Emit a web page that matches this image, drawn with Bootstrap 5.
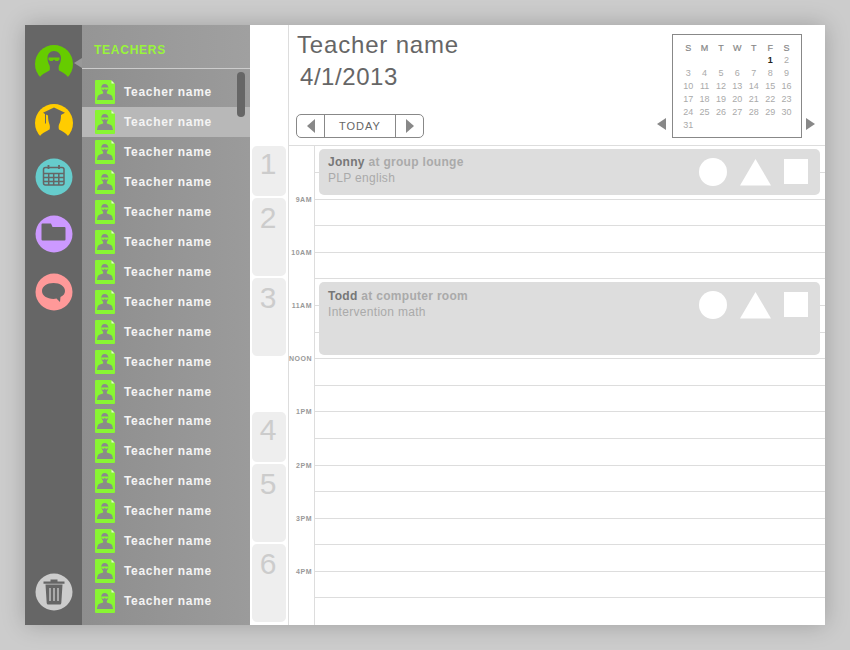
<!DOCTYPE html>
<html lang="en"><head><meta charset="utf-8"><title>Teachers</title>
<link href="https://cdn.jsdelivr.net/npm/bootstrap@5.3.0/dist/css/bootstrap.min.css" rel="stylesheet">
<style>
html,body{height:100%}
body{background:#ccc;font-family:"Liberation Sans",Arial,sans-serif;overflow:hidden}
.app-shell{width:800px;height:600px;margin:25px;background:#fff;box-shadow:0 0 22px rgba(0,0,0,.22);overflow:hidden}
.rail{width:57px;background:#666;padding-top:20px;position:relative}
.rail-ico{display:block;width:38px;height:38px;margin-left:10px;flex:none}
.r1{margin-bottom:21px}.r2{margin-bottom:15.5px}.r3{margin-bottom:19px}.r4{margin-bottom:20px}
.rail-trash{margin-top:auto;margin-bottom:14.5px}
.panel{width:168px;background:linear-gradient(90deg,#8e8e8e,#9b9b9b);position:relative}
.panel-head{height:44px;border-bottom:1px solid #ccc;background:linear-gradient(90deg,#959595,#a0a0a0);padding:18px 0 0 12px;color:#99f53a;font-weight:700;font-size:12px;line-height:14px;letter-spacing:.75px}
.notch{position:absolute;left:-8px;top:33px;width:0;height:0;border-style:solid;border-width:5.5px 8px 5.5px 0;border-color:transparent #999 transparent transparent}
.t-list{padding-top:8px}
.t-row{height:29.96px;padding-left:13px;color:#f4f4f4;font-weight:700;font-size:12px;letter-spacing:.67px}
.t-row.on{background:#b8b8b8}
.t-ico{width:20px;height:24px;margin-right:9px;flex:none}
.thumb{position:absolute;left:155px;top:47px;width:7.5px;height:45px;border-radius:4px;background:#666}
.gutter{width:39px;border-right:1px solid #ddd;padding:121px 2px 0 2px;flex:none}
.period{background:#eee;border-radius:5px;width:34px;color:#ccc;font-size:30px;padding-right:2px;text-align:center;margin-bottom:2px}
.h50{height:50px;line-height:35px}.h78{height:78px;line-height:40px}.skip{margin-top:56px}
.top-bar{height:121px;border-bottom:1px solid #ddd;position:relative;flex:none;padding-left:7px}
.ttl{font-size:24px;line-height:30px;color:#666;letter-spacing:.83px;margin-top:5px;padding-left:1px}
.dte{font-size:24px;line-height:30px;color:#666;letter-spacing:.55px;margin-top:2px;padding-left:4px}
.today{margin-top:22px;width:128px;height:24px;border:1px solid #888;border-radius:5px;color:#666;font-size:11px;letter-spacing:1px}
.today>div{height:100%}
.seg1{width:28px;border-right:1px solid #888}
.seg2{width:71px;border-right:1px solid #888}
.seg3{flex:1}
.mini{position:absolute;left:383px;top:9px;width:130px;height:104px;border:1px solid #888;padding:7px 7px 0 7px;display:grid;grid-template-columns:repeat(7,16.4px);grid-template-rows:12px;grid-auto-rows:13px;font-size:9px;line-height:13px;color:#aaa;text-align:center;background:#fff}
.mini b{color:#888;font-weight:400;-webkit-text-stroke:.2px #888}
.mini .cur{color:#222;font-weight:700}
.m-prev{position:absolute;left:368px;top:93px}
.m-next{position:absolute;left:517px;top:93px}
.time-col{width:26px;border-right:1px solid #ddd;flex:none;padding-top:26.6px;font-size:7px;font-weight:700;color:#999;letter-spacing:.5px;text-align:right}
.time-col div{height:53.2px;line-height:53.2px;padding-right:2px}
.grid-area{position:relative;flex:1;padding-top:.4px}
.hl{height:26.6px;border-bottom:1px solid #ddd}
.evt{position:absolute;left:4px;right:5px;background:#ddd;border-radius:5px;padding:6px 9px;font-size:12px;line-height:16px;letter-spacing:.3px;color:#aaa}
.evt strong{color:#777}.evt .wh{font-weight:700;color:#aaa}
.e1{top:3px;height:46px;padding-top:5px}.e2{top:136px;height:73px}
.shapes{position:absolute;right:12px;top:9px}
</style></head>
<body>
<svg width="0" height="0" class="position-absolute">
<symbol id="tdoc" viewBox="0 0 20 24">
<path d="M1 0H16L20 4V23a1 1 0 0 1-1 1H1a1 1 0 0 1-1-1V1a1 1 0 0 1 1-1Z" fill="#88f533"/>
<path d="M16.500 .5 19.500 3.500H16.500Z" fill="#e6f7d2"/>
<path d="M9.700 4c2.200 0 3.600 1.500 3.600 3.600 0 1.800-.6 3.300-1.500 4.300v1.700c1.600 .8 4.800 1.200 5.400 2.800l.8 3.600H1.900l.8-3.600c.6-1.600 3.800-2 5.400-2.800v-1.700c-.9-1-1.800-2.500-1.800-4.300C6.300 5.500 7.500 4 9.700 4Z" fill="#8a8a8a"/>
<path d="M6.300 7.500h6.900v1.200l-1.200 1h-1.300l-.9-1-.9 1H7.600l-1.300-1Z" fill="#88f533"/>
</symbol>
<symbol id="shp" viewBox="0 0 109 28"><circle cx="14" cy="14" r="14" fill="#fff"/><path d="M41 27.500 56.500 1 72 27.500Z" fill="#fff"/><rect x="85" y="1" width="24" height="25" fill="#fff"/></symbol>
</svg>
<div class="app-shell d-flex">
  <div class="rail d-flex flex-column">
    <svg class="rail-ico r1" viewBox="0 0 38 38"><circle cx="19" cy="19" r="19" fill="#6c0"/><path d="M5 32C7 29 12 27 14.500 25.500 15 24 15 22 14.500 20.500 13 18 12.500 15 12.500 13 12.500 9 15 6 19 6 23 6 26 9 26 13 26 15 25.500 18 24 20.500 23.500 22 23.500 24 24 25.500 27 27 31 29 33 32L33 38H5Z" fill="#666"/><path d="M13.500 12.500H24.500V14.500L23 16H20.500L19 14.500 17.500 16H15L13.500 14.500Z" fill="#6c0"/></svg>
    <svg class="rail-ico r2" viewBox="0 0 38 38"><circle cx="19" cy="19" r="19" fill="#fc0"/><path d="M5 32C7 29 12 27 14.500 25.500 15 24 15 22 14.500 20.500 13.500 18 13 15 13 11.500L11 10.500V19.500H10V10L8 8.800 19 3.500 30 8.800 26 11C26 15 25.500 18 24 20.500 23.500 22 23.500 24 24 25.500 27 27 31 29 33 32L33 38H5Z" fill="#666"/></svg>
    <svg class="rail-ico r3" viewBox="0 0 38 38"><circle cx="19" cy="19" r="18.500" fill="#6cc"/><g fill="none" stroke="#666" stroke-width="1.500"><rect x="8.500" y="9.500" width="20.500" height="17.500" rx="2"/><path d="M8.500 15.500H29M8.500 19.500H29M8.500 23.500H29M13.700 15.500V27M18.700 15.500V27M23.800 15.500V27"/><path d="M13.500 7V11M24 7V11" stroke-width="1.800"/></g></svg>
    <svg class="rail-ico r4" viewBox="0 0 38 38"><circle cx="19" cy="19" r="18.500" fill="#c9f"/><path d="M6.500 9.500a1 1 0 0 1 1-1h8.500l1.500 3.500H29.500a1 1 0 0 1 1 1V24.500a1 1 0 0 1-1 1H7.500a1 1 0 0 1-1-1Z" fill="#666"/></svg>
    <svg class="rail-ico" viewBox="0 0 38 38"><circle cx="19" cy="19" r="18.500" fill="#f99"/><path d="M18.500 10c6.500 0 11.500 3.400 11.500 8 0 2.600-1.400 4.500-4.500 6l-.5 5-3.500-3.400c-1 .2-2 .3-3 .3-6.500 0-11.500-3.300-11.500-7.900S12 10 18.500 10Z" fill="#666"/></svg>
    <svg class="rail-ico rail-trash" viewBox="0 0 38 38"><circle cx="19" cy="19" r="18.500" fill="#ccc"/><path d="M8.500 8.500h7V6.500h7v2h7v2.200H8.500Z" fill="#666"/><path d="M10.500 11.500H27.500L26.300 30a1.500 1.500 0 0 1-1.500 1.500H13.200A1.500 1.500 0 0 1 11.700 30Z" fill="#666"/><path d="M15 15V28M19 15V28M23 15V28" stroke="#ccc" stroke-width="1.300"/></svg>
  </div>
  <div class="panel">
    <div class="notch"></div>
    <div class="panel-head">TEACHERS</div>
    <div class="t-list">
      <div class="t-row d-flex align-items-center"><svg class="t-ico"><use href="#tdoc"/></svg>Teacher name</div>
      <div class="t-row on d-flex align-items-center"><svg class="t-ico"><use href="#tdoc"/></svg>Teacher name</div>
      <div class="t-row d-flex align-items-center"><svg class="t-ico"><use href="#tdoc"/></svg>Teacher name</div>
      <div class="t-row d-flex align-items-center"><svg class="t-ico"><use href="#tdoc"/></svg>Teacher name</div>
      <div class="t-row d-flex align-items-center"><svg class="t-ico"><use href="#tdoc"/></svg>Teacher name</div>
      <div class="t-row d-flex align-items-center"><svg class="t-ico"><use href="#tdoc"/></svg>Teacher name</div>
      <div class="t-row d-flex align-items-center"><svg class="t-ico"><use href="#tdoc"/></svg>Teacher name</div>
      <div class="t-row d-flex align-items-center"><svg class="t-ico"><use href="#tdoc"/></svg>Teacher name</div>
      <div class="t-row d-flex align-items-center"><svg class="t-ico"><use href="#tdoc"/></svg>Teacher name</div>
      <div class="t-row d-flex align-items-center"><svg class="t-ico"><use href="#tdoc"/></svg>Teacher name</div>
      <div class="t-row d-flex align-items-center"><svg class="t-ico"><use href="#tdoc"/></svg>Teacher name</div>
      <div class="t-row d-flex align-items-center"><svg class="t-ico"><use href="#tdoc"/></svg>Teacher name</div>
      <div class="t-row d-flex align-items-center"><svg class="t-ico"><use href="#tdoc"/></svg>Teacher name</div>
      <div class="t-row d-flex align-items-center"><svg class="t-ico"><use href="#tdoc"/></svg>Teacher name</div>
      <div class="t-row d-flex align-items-center"><svg class="t-ico"><use href="#tdoc"/></svg>Teacher name</div>
      <div class="t-row d-flex align-items-center"><svg class="t-ico"><use href="#tdoc"/></svg>Teacher name</div>
      <div class="t-row d-flex align-items-center"><svg class="t-ico"><use href="#tdoc"/></svg>Teacher name</div>
      <div class="t-row d-flex align-items-center"><svg class="t-ico"><use href="#tdoc"/></svg>Teacher name</div>
    </div>
    <div class="thumb"></div>
  </div>
  <div class="gutter">
    <div class="period h50">1</div>
    <div class="period h78">2</div>
    <div class="period h78">3</div>
    <div class="period h50 skip">4</div>
    <div class="period h78">5</div>
    <div class="period h78">6</div>
  </div>
  <div class="flex-grow-1 d-flex flex-column">
    <div class="top-bar">
      <div class="ttl">Teacher name</div>
      <div class="dte">4/1/2013</div>
      <div class="today d-flex text-center">
        <div class="seg1 d-flex align-items-center justify-content-center"><svg width="8" height="14"><path d="M8 0V14L0 7Z" fill="#888"/></svg></div>
        <div class="seg2 d-flex align-items-center justify-content-center">TODAY</div>
        <div class="seg3 d-flex align-items-center justify-content-center"><svg width="8" height="14"><path d="M0 0V14L8 7Z" fill="#888"/></svg></div>
      </div>
      <svg class="m-prev" width="9" height="12"><path d="M9 0V12L0 6Z" fill="#888"/></svg>
      <div class="mini">
        <b>S</b><b>M</b><b>T</b><b>W</b><b>T</b><b>F</b><b>S</b>
        <span></span><span></span><span></span><span></span><span></span><span class="cur">1</span><span>2</span>
        <span>3</span><span>4</span><span>5</span><span>6</span><span>7</span><span>8</span><span>9</span>
        <span>10</span><span>11</span><span>12</span><span>13</span><span>14</span><span>15</span><span>16</span>
        <span>17</span><span>18</span><span>19</span><span>20</span><span>21</span><span>22</span><span>23</span>
        <span>24</span><span>25</span><span>26</span><span>27</span><span>28</span><span>29</span><span>30</span>
        <span>31</span>
      </div>
      <svg class="m-next" width="9" height="12"><path d="M0 0V12L9 6Z" fill="#888"/></svg>
    </div>
    <div class="d-flex flex-grow-1">
      <div class="time-col"><div>9AM</div><div>10AM</div><div>11AM</div><div>NOON</div><div>1PM</div><div>2PM</div><div>3PM</div><div>4PM</div></div>
      <div class="grid-area">
        <div class="hl"></div><div class="hl"></div><div class="hl"></div><div class="hl"></div><div class="hl"></div><div class="hl"></div><div class="hl"></div><div class="hl"></div><div class="hl"></div><div class="hl"></div><div class="hl"></div><div class="hl"></div><div class="hl"></div><div class="hl"></div><div class="hl"></div><div class="hl"></div><div class="hl"></div>
        <div class="evt e1"><strong>Jonny</strong> <span class="wh">at group lounge</span><br>PLP english
          <svg class="shapes" width="109" height="28"><use href="#shp"/></svg></div>
        <div class="evt e2"><strong>Todd</strong> <span class="wh">at computer room</span><br>Intervention math
          <svg class="shapes" width="109" height="28"><use href="#shp"/></svg></div>
      </div>
    </div>
  </div>
</div>
<script src="https://cdn.jsdelivr.net/npm/bootstrap@5.3.0/dist/js/bootstrap.bundle.min.js"></script>
</body></html>
